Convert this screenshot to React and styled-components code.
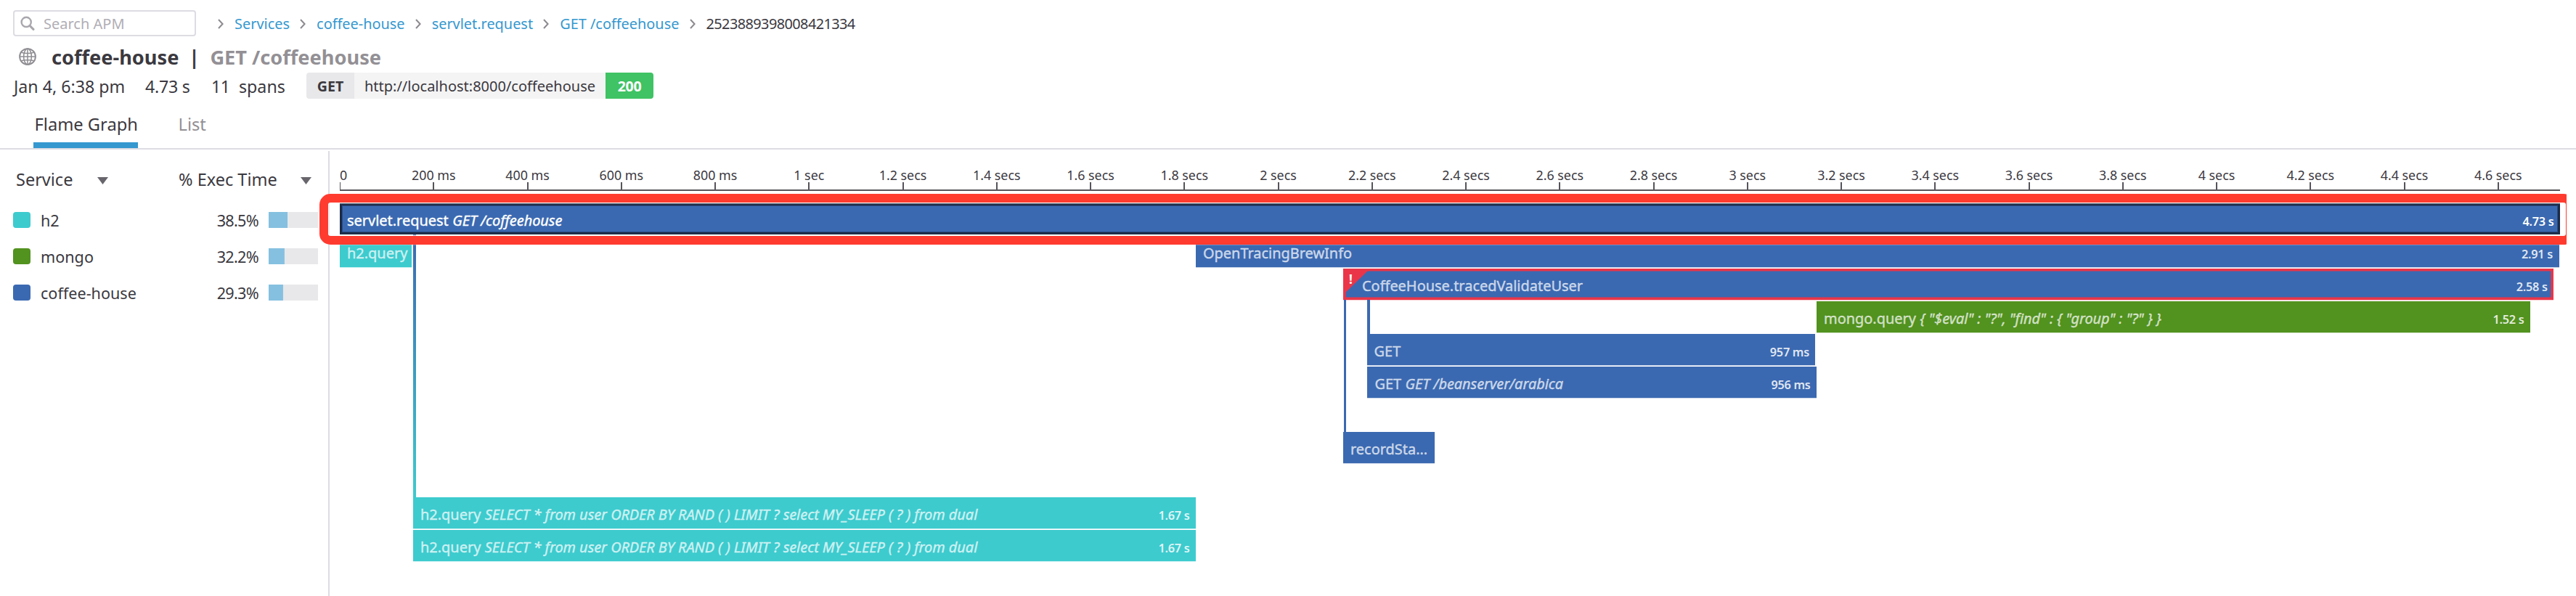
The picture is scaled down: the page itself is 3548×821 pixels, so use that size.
import React from "react";
import styled, { createGlobalStyle, css } from "styled-components";

const COLORS = {
  h2: "#3dcbce",
  mongo: "#52921f",
  coffee: "#3b69b1",
  ink: "#3b393f",
  muted: "#939095",
  link: "#3598cf",
  rule: "#dddce3",
  error: "#ea3549",
};

const Global = createGlobalStyle`
  *, *::before, *::after { box-sizing: border-box; }
  body {
    margin: 0;
    background: #fff;
    color: ${COLORS.ink};
    font-family: "Noto Sans", "Open Sans", sans-serif;
    overflow: hidden;
  }
`;

const Page = styled.div`
  display: flex;
  flex-direction: column;
  width: 3548px;
  height: 821px;
  background: #fff;
  overflow: hidden;
  white-space: nowrap;
`;

/* ---------- header ---------- */

const TopBar = styled.header`
  display: flex;
  align-items: center;
  height: 58px;
  padding: 6px 0 0 18px;
`;

const SearchBox = styled.div`
  display: flex;
  align-items: center;
  gap: 12px;
  width: 252px;
  height: 36px;
  margin-right: 16px;
  padding-left: 8px;
  border: 2px solid ${COLORS.rule};
  border-radius: 4px;
  color: #b0aeb5;
  font-size: 20px;
  line-height: 32px;
`;

const SearchText = styled.span`
  padding-top: 2px;
`;

const Breadcrumbs = styled.nav`
  display: flex;
  align-items: center;
  height: 36px;
  padding-top: 2px;
`;

const Crumb = styled.span`
  display: flex;
  align-items: center;
  color: ${(p) => (p.$current ? COLORS.ink : COLORS.link)};
  font-size: 19.9px;
  line-height: 34px;
  letter-spacing: ${(p) => (p.$current ? "-0.58px" : "0")};
`;

const CrumbArrow = styled.svg`
  width: 8px;
  height: 14px;
  margin: 0 14.8px 0 14.3px;
  stroke: #8d8a90;
`;

const TitleRow = styled.h1`
  display: flex;
  align-items: center;
  height: 42px;
  margin: 0;
  padding-left: 26px;
  font-size: 27.2px;
  font-weight: 700;
  line-height: 42px;
`;

const GlobeIcon = styled.svg`
  width: 24px;
  height: 24px;
  margin: 0 21px 2px 0;
  fill: none;
  stroke: #8f8d92;
`;

const Divider = styled.span`
  margin: 0 14.5px 0 13.5px;
`;

const Resource = styled.span`
  color: ${COLORS.muted};
`;

const MetaRow = styled.div`
  display: grid;
  grid-template-columns: 181px 91px 38px 93px auto;
  align-items: center;
  height: 36px;
  padding-left: 19px;
`;

const MetaText = styled.span`
  padding-top: 2px;
  font-size: 23.2px;
  line-height: 34px;
  letter-spacing: ${(p) => p.$spacing || "0"};
`;

const RequestPill = styled.div`
  display: flex;
  width: 478px;
  height: 36px;
  border-radius: 4px;
  overflow: hidden;
  font-size: 20px;
  line-height: 38px;
  text-align: center;
`;

const Method = styled.span`
  width: 66px;
  background: #e8e8ea;
  font-size: 19.6px;
  font-weight: 700;
`;

const Url = styled.span`
  width: 346px;
  background: #f4f4f4;
`;

const Status = styled.span`
  width: 66px;
  background: #3fc364;
  color: #fff;
  font-size: 19.6px;
  font-weight: 700;
  letter-spacing: -0.4px;
`;

const Tabs = styled.nav`
  display: flex;
  height: 70px;
  padding-left: 46px;
  border-bottom: 2px solid ${COLORS.rule};
`;

const Tab = styled.span`
  height: 68px;
  width: ${(p) => (p.$active ? "144px" : "auto")};
  margin-right: 55px;
  padding: 10px 0 0 ${(p) => (p.$active ? 1 : 0)}px;
  border-bottom: 8px solid ${(p) => (p.$active ? COLORS.link : "transparent")};
  color: ${(p) => (p.$active ? COLORS.ink : COLORS.muted)};
  font-size: 23.7px;
  line-height: 50px;
  text-indent: 0.5px;
`;

/* ---------- body ---------- */

const Body = styled.main`
  display: flex;
  flex: 1;
`;

const Sidebar = styled.aside`
  width: 454px;
  margin-top: 2px;
  padding-top: 7px;
  border-right: 2px solid ${COLORS.rule};
`;

const SidebarHeader = styled.div`
  display: grid;
  grid-template-columns: 112px 112px 167px auto;
  align-items: center;
  height: 63px;
  padding-left: 22px;
  font-size: 23.5px;
`;

const Caret = styled.svg`
  width: 16px;
  height: 10px;
  margin-top: 4px;
  fill: #68666c;
`;

const ServiceRow = styled.div`
  display: flex;
  align-items: center;
  height: 50px;
  padding: 0 14px 0 18px;
  font-size: 21.6px;
`;

const Swatch = styled.span`
  width: 24px;
  height: 22px;
  margin-right: 14px;
  border-radius: 4px;
  background: ${(p) => p.$color};
`;

const Percent = styled.span`
  margin-left: auto;
  margin-right: 14px;
  letter-spacing: -0.7px;
`;

const Meter = styled.span`
  width: 68px;
  height: 22px;
  background: linear-gradient(#85c0e0, #85c0e0) no-repeat #e8e8ea;
  background-size: ${(p) => p.$value}% 100%;
`;

const FlamePanel = styled.section`
  width: 3072px;
  padding-left: 14px;
`;

const Axis = styled.div`
  display: flex;
  height: 57px;
  padding-top: 25px;
  border-bottom: 2px solid #56545a;
  overflow: hidden;
`;

const AxisTick = styled.span`
  position: relative;
  flex: none;
  width: ${(p) => (p.$first ? "64.63px" : "129.26px")};
  height: 30px;
  font-size: 17.85px;
  line-height: 20px;
  text-align: ${(p) => (p.$first ? "left" : "center")};

  &::after {
    content: "";
    position: absolute;
    bottom: 0;
    left: ${(p) => (p.$first ? "0" : "calc(50% - 1px)")};
    width: ${(p) => (p.$first ? "1px" : "2px")};
    height: 10px;
    background: #56545a;
  }
`;

const Graph = styled.div`
  position: relative;
  display: flex;
  flex-direction: column;
  gap: 2px;
  padding-top: 17px;
`;

const Lane = styled.div`
  display: flex;
  height: 43px;
`;

const SpanBar = styled.div`
  position: relative;
  display: flex;
  flex: none;
  align-items: baseline;
  width: ${(p) => p.$width}px;
  height: 43px;
  margin-left: ${(p) => p.$gap}px;
  padding: 4px 8.5px 0 ${(p) => (p.$outline === "error" ? 26 : 10)}px;
  background: ${(p) => p.$color};
  color: rgba(255, 255, 255, ${(p) => (p.$outline === "selected" ? 1 : 0.7)});
  font-size: 19.95px;
  line-height: 39px;
  -webkit-text-stroke: 0.4px currentColor;
  box-shadow: 0 1px 0 ${(p) => p.$color}40;
  ${(p) =>
    p.$outline === "selected" &&
    css`
      box-shadow: inset 0 0 0 3px #1b2b48, inset 0 0 0 4px #2c4c82;
    `}
  ${(p) =>
    p.$outline === "error" &&
    css`
      box-shadow: inset 0 0 0 3.6px ${COLORS.error}, 0 1px 0 ${COLORS.error}40;
    `}
`;

const Detail = styled.em`
  margin-left: 5.5px;
  letter-spacing: -0.04px;
`;

const Duration = styled.span`
  margin-left: auto;
  color: rgba(255, 255, 255, ${(p) => (p.$strong ? 1 : 0.85)});
  font-size: 16.3px;
  font-weight: 600;
  letter-spacing: -0.3px;
  -webkit-text-stroke: 0;
`;

const ErrorFlag = styled.svg`
  position: absolute;
  left: 0;
  top: 0;
  width: 37px;
  height: 37px;
  fill: ${COLORS.error};
`;

const ErrorMark = styled.span`
  position: absolute;
  left: 8px;
  top: 4px;
  color: #fff;
  font-size: 17px;
  font-weight: 700;
  line-height: 21px;
  -webkit-text-stroke: 0;
`;

const Connector = styled.span`
  position: absolute;
  left: ${(p) => p.$x}px;
  top: ${(p) => p.$top}px;
  width: 3.5px;
  height: ${(p) => p.$height}px;
  background: linear-gradient(${COLORS.coffee}, ${(p) => p.$to});
`;

const HighlightClip = styled.div`
  position: absolute;
  left: -29px;
  top: 3px;
  width: 3096px;
  height: 72px;
  overflow: hidden;
  pointer-events: none;
`;

const Highlight = styled.div`
  width: 3106px;
  height: 69.5px;
  margin: 1px;
  border: 12.8px solid #ff3b30;
  border-radius: 15px;
  box-shadow: 0 0 2px rgba(255, 255, 255, 0.9), inset 0 0 2px 1px #fff;
`;

/* ---------- data ---------- */

const crumbs = ["Services", "coffee-house", "servlet.request", "GET /coffeehouse", "2523889398008421334"];

const services = [
  { name: "h2", value: 38.5, color: COLORS.h2 },
  { name: "mongo", value: 32.2, color: COLORS.mongo },
  { name: "coffee-house", value: 29.3, color: COLORS.coffee },
];

const ticks = Array.from({ length: 24 }, (_, i) => {
  if (i === 0) return "0";
  return i < 5 ? `${i * 200} ms` : `${(i * 2) / 10} sec${i === 5 ? "" : "s"}`;
});

const query = "SELECT * from user ORDER BY RAND ( ) LIMIT ? select MY_SLEEP ( ? ) from dual";

// start and end are offsets along the time axis, in pixels
const lanes = [
  [{ start: 0, end: 3058, name: "servlet.request", detail: "GET /coffeehouse", time: "4.73 s", color: COLORS.coffee, outline: "selected" }],
  [
    { start: 0, end: 99, name: "h2.query", color: COLORS.h2 },
    { start: 1179, end: 3056.5, name: "OpenTracingBrewInfo", time: "2.91 s", color: COLORS.coffee },
  ],
  [{ start: 1382, end: 3049.2, name: "CoffeeHouse.tracedValidateUser", time: "2.58 s", color: COLORS.coffee, outline: "error" }],
  [{ start: 2034, end: 3017, name: "mongo.query", detail: '{ "$eval" : "?", "find" : { "group" : "?" } }', time: "1.52 s", color: COLORS.mongo }],
  [{ start: 1414.6, end: 2032.4, name: "GET", time: "957 ms", color: COLORS.coffee }],
  [{ start: 1415.4, end: 2034, name: "GET", detail: "GET /beanserver/arabica", time: "956 ms", color: COLORS.coffee }],
  [],
  [{ start: 1382, end: 1508.3, name: "recordSta...", color: COLORS.coffee }],
  [],
  [{ start: 101, end: 1179, name: "h2.query", detail: query, time: "1.67 s", color: COLORS.h2 }],
  [{ start: 101, end: 1179, name: "h2.query", detail: query, time: "1.67 s", color: COLORS.h2 }],
];

function Span({ span, previousEnd }) {
  return (
    <SpanBar
      $width={span.end - span.start}
      $gap={span.start - previousEnd}
      $color={span.color}
      $outline={span.outline}
    >
      {span.outline === "error" && (
        <>
          <ErrorFlag viewBox="0 0 37 37">
            <path d="M0 0H37L0 36Z" />
          </ErrorFlag>
          <ErrorMark>!</ErrorMark>
        </>
      )}
      <span>{span.name}</span>
      {span.detail && <Detail>{span.detail}</Detail>}
      {span.time && <Duration $strong={span.outline === "selected"}>{span.time}</Duration>}
    </SpanBar>
  );
}

export default function App() {
  return (
    <Page>
      <Global />
      <TopBar>
        <SearchBox>
          <svg width="20" height="20" viewBox="0 0 20 20" fill="none" stroke="#a9a7ad">
            <circle cx="8.2" cy="8.4" r="6.6" strokeWidth="2.4" />
            <path d="M13 13.4L18 18.4" strokeWidth="3" strokeLinecap="round" />
          </svg>
          <SearchText>Search APM</SearchText>
        </SearchBox>
        <Breadcrumbs>
          {crumbs.map((text, i) => (
            <Crumb key={text} $current={i === crumbs.length - 1}>
              <CrumbArrow viewBox="0 0 8 14" fill="none" strokeWidth="2">
                <path d="M1 1L6.6 7L1 13" />
              </CrumbArrow>
              {text}
            </Crumb>
          ))}
        </Breadcrumbs>
      </TopBar>

      <TitleRow>
        <GlobeIcon viewBox="0 0 24 24" strokeWidth="1.5">
          <circle cx="12" cy="12" r="10.9" strokeWidth="1.9" />
          <ellipse cx="12" cy="12" rx="5.4" ry="10.9" />
          <path d="M12 1V23M1 12H23M3.4 6.2Q12 9 20.6 6.2M3.4 17.8Q12 15 20.6 17.8" />
        </GlobeIcon>
        <span>coffee-house</span>
        <Divider>|</Divider>
        <Resource>GET /coffeehouse</Resource>
      </TitleRow>

      <MetaRow>
        <MetaText>Jan 4, 6:38 pm</MetaText>
        <MetaText $spacing="-0.25px">4.73 s</MetaText>
        <MetaText $spacing="-0.4px">11</MetaText>
        <MetaText>spans</MetaText>
        <RequestPill>
          <Method>GET</Method>
          <Url>http://localhost:8000/coffeehouse</Url>
          <Status>200</Status>
        </RequestPill>
      </MetaRow>

      <Tabs>
        <Tab $active>Flame Graph</Tab>
        <Tab>List</Tab>
      </Tabs>

      <Body>
        <Sidebar>
          <SidebarHeader>
            <span>Service</span>
            <Caret viewBox="0 0 16 10"><path d="M0 0H15L7.5 10Z" /></Caret>
            <span>% Exec Time</span>
            <Caret viewBox="0 0 16 10"><path d="M1 0H16L8.5 10Z" /></Caret>
          </SidebarHeader>
          {services.map((s) => (
            <ServiceRow key={s.name}>
              <Swatch $color={s.color} />
              <span>{s.name}</span>
              <Percent>{s.value}%</Percent>
              <Meter $value={s.value} />
            </ServiceRow>
          ))}
        </Sidebar>

        <FlamePanel>
          <Axis>
            {ticks.map((label, i) => (
              <AxisTick key={label} $first={i === 0}>{label}</AxisTick>
            ))}
          </Axis>
          <Graph>
            {lanes.map((spans, row) => (
              <Lane key={row}>
                {spans.map((span, i) => (
                  <Span key={span.start} span={span} previousEnd={i ? spans[i - 1].end : 0} />
                ))}
              </Lane>
            ))}
            <Connector $x={101} $top={60} $height={362} $to={COLORS.h2} />
            <Connector $x={1382.5} $top={150} $height={182} $to={COLORS.coffee} />
            <Connector $x={1415} $top={150} $height={47} $to={COLORS.coffee} />
            <HighlightClip>
              <Highlight />
            </HighlightClip>
          </Graph>
        </FlamePanel>
      </Body>
    </Page>
  );
}
